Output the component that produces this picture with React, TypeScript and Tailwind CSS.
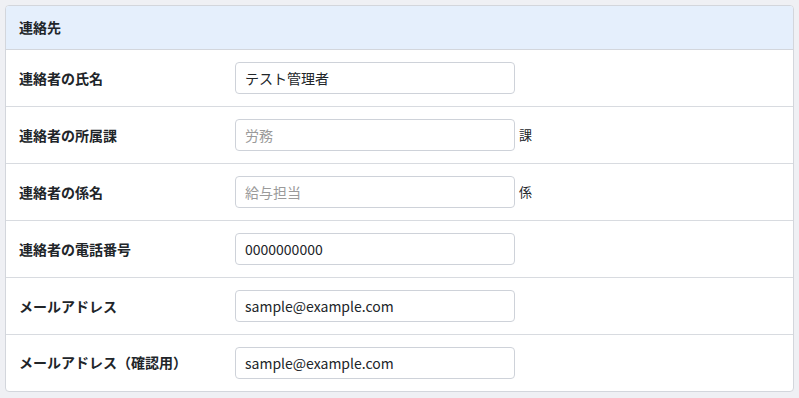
import React from "react";

type Row = { label: string; value?: string; placeholder?: string; suffix?: string };

const rows: Row[] = [
  { label: "連絡者の氏名", value: "テスト管理者" },
  { label: "連絡者の所属課", placeholder: "労務", suffix: "課" },
  { label: "連絡者の係名", placeholder: "給与担当", suffix: "係" },
  { label: "連絡者の電話番号", value: "0000000000" },
  { label: "メールアドレス", value: "sample@example.com" },
  { label: "メールアドレス（確認用）", value: "sample@example.com" },
];

export default function App() {
  return (
    <div
      className="min-h-[398px] w-full bg-[#eff0f4] p-[5px] text-[#212529]"
      style={{ fontFamily: '"Noto Sans CJK JP", "Noto Sans", sans-serif' }}
    >
      <div className="overflow-hidden rounded-[4px] border border-[#d3d6dc] bg-white">
        <div className="flex h-[44px] items-center border-b border-[#d3d6dc] bg-[#e5effc] pl-[13px] text-[14px] font-bold">
          連絡先
        </div>
        {rows.map((r, i) => (
          <div
            key={r.label}
            className={`flex items-center ${i < rows.length - 1 ? "h-[57px] border-b border-[#d8dbe0]" : "h-[56px] pb-[1px]"}`}
          >
            <div className="w-[229px] shrink-0 pl-[13px] text-[14px] font-bold">{r.label}</div>
            <input
              readOnly
              defaultValue={r.value}
              placeholder={r.placeholder}
              className="h-[32px] w-[280px] rounded-[4px] border border-[#ced2d9] bg-white px-[9px] text-[14px] text-[#212529] outline-none placeholder:text-[#9a9a9a]"
            />
            {r.suffix && <span className="ml-[4px] text-[13px]">{r.suffix}</span>}
          </div>
        ))}
      </div>
    </div>
  );
}
